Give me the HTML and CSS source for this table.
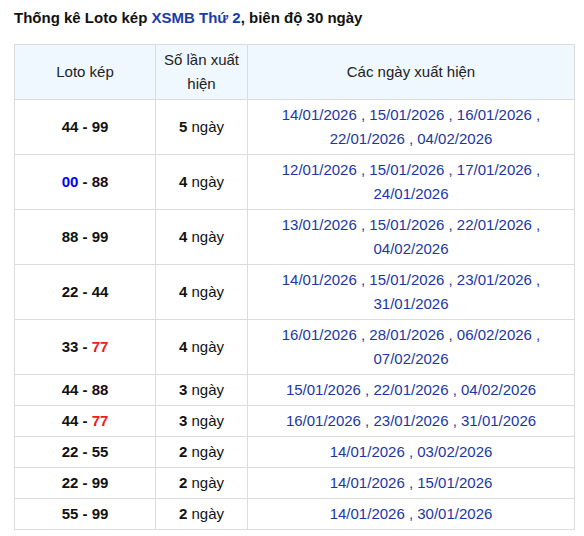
FILE: index.html
```html
<!DOCTYPE html>
<html lang="vi">
<head>
<meta charset="utf-8">
<link rel="stylesheet" href="styles.css">
</head>
<body>
<div class="wrap">
  <h2 class="title">Thống kê Loto kép <a class="lnk">XSMB Thứ 2</a>, biên độ 30 ngày</h2>
  <table class="tbl">
    <colgroup><col class="c1"><col class="c2"><col class="c3"></colgroup>
    <thead>
      <tr><th>Loto kép</th><th>Số lần xuất hiện</th><th>Các ngày xuất hiện</th></tr>
    </thead>
    <tbody>
      <tr><td class="pair">44 - 99</td><td><b>5</b> ngày</td><td class="dates">14/01/2026 , 15/01/2026 , 16/01/2026 , 22/01/2026 , 04/02/2026</td></tr>
      <tr><td class="pair"><span class="blue">00</span> - 88</td><td><b>4</b> ngày</td><td class="dates">12/01/2026 , 15/01/2026 , 17/01/2026 , 24/01/2026</td></tr>
      <tr><td class="pair">88 - 99</td><td><b>4</b> ngày</td><td class="dates">13/01/2026 , 15/01/2026 , 22/01/2026 , 04/02/2026</td></tr>
      <tr><td class="pair">22 - 44</td><td><b>4</b> ngày</td><td class="dates">14/01/2026 , 15/01/2026 , 23/01/2026 , 31/01/2026</td></tr>
      <tr><td class="pair">33 - <span class="red">77</span></td><td><b>4</b> ngày</td><td class="dates">16/01/2026 , 28/01/2026 , 06/02/2026 , 07/02/2026</td></tr>
      <tr><td class="pair">44 - 88</td><td><b>3</b> ngày</td><td class="dates">15/01/2026 , 22/01/2026 , 04/02/2026</td></tr>
      <tr><td class="pair">44 - <span class="red">77</span></td><td><b>3</b> ngày</td><td class="dates">16/01/2026 , 23/01/2026 , 31/01/2026</td></tr>
      <tr><td class="pair">22 - 55</td><td><b>2</b> ngày</td><td class="dates">14/01/2026 , 03/02/2026</td></tr>
      <tr><td class="pair">22 - 99</td><td><b>2</b> ngày</td><td class="dates">14/01/2026 , 15/01/2026</td></tr>
      <tr><td class="pair">55 - 99</td><td><b>2</b> ngày</td><td class="dates">14/01/2026 , 30/01/2026</td></tr>
    </tbody>
  </table>
</div>
</body>
</html>
```
FILE: styles.css
```css
html, body {
  margin: 0;
  padding: 0;
  background: #fff;
}
body {
  font-family: "Liberation Sans", Arial, sans-serif;
  font-size: 15px;
  color: #111;
}
.wrap {
  padding: 7px 8px 0 14px;
}
.title {
  margin: 0 0 16px 0;
  font-size: 15px;
  line-height: 21px;
  font-weight: bold;
  color: #111;
}
.lnk {
  color: #1a3ca8;
  text-decoration: none;
}
.tbl {
  border-collapse: collapse;
  width: 561px;
  table-layout: fixed;
}
.c1 { width: 141px; }
.c2 { width: 92px; }
.tbl th, .tbl td {
  border: 1px solid #dcdcdc;
  padding: 3px 4px;
  line-height: 24px;
  text-align: center;
  vertical-align: middle;
}
.tbl th {
  background: #eff7ff;
  font-weight: normal;
  color: #222;
}
.tbl td {
  color: #111;
}
.pair {
  font-weight: bold;
}
.blue { color: #0000ff; }
.red { color: #ec1c24; }
.tbl td.dates {
  color: #1b37a6;
}
```
